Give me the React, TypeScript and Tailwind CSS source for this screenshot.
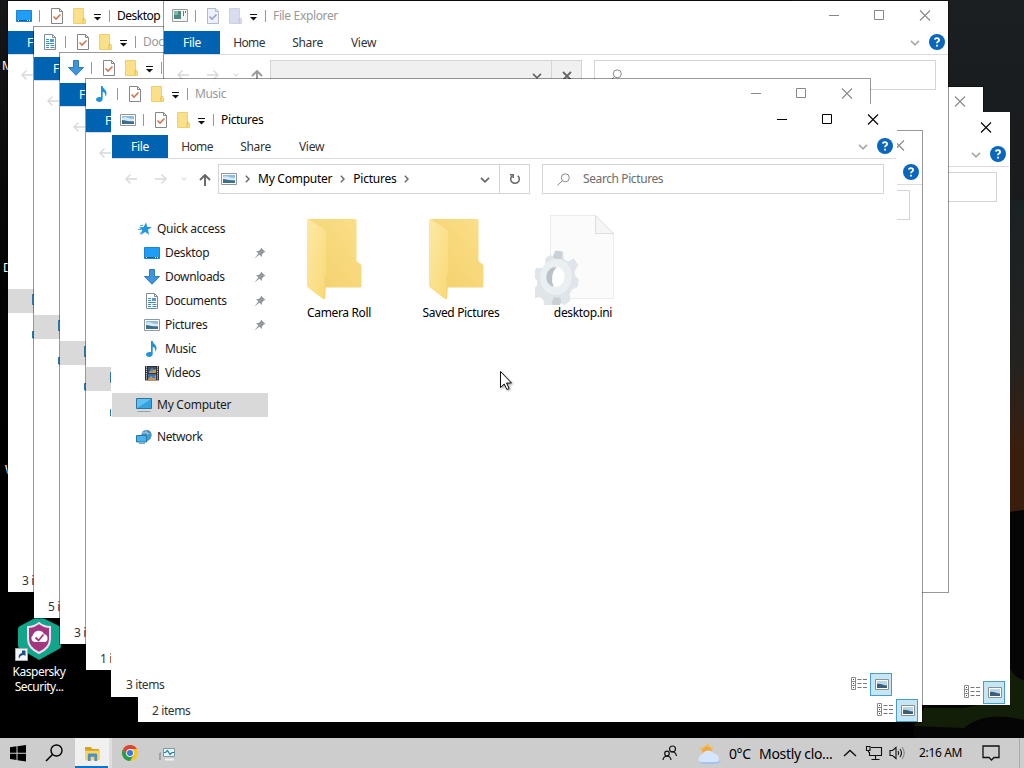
import type { ReactNode } from 'react';
import clsx from 'clsx';

type IconName = 'desktop' | 'documents' | 'downloads' | 'music' | 'pictures' | 'videos' | 'explorer' | 'computer' | 'network' | 'star';

interface WindowProps {
  title?: string;
  icon: IconName;
  place: string;
  active?: boolean;
  loading?: boolean;
  covered?: boolean;
  behind?: boolean;
  items?: string;
  children?: ReactNode;
}

const Icon = ({ name }: { name: IconName }) => {
  switch (name) {
    case 'desktop':
      return (
        <svg width="16" height="16" viewBox="0 0 16 16" className="shrink-0">
          <path d="M.5 2.500h15v11H.5z" fill="#1e9ff5" stroke="#1b85d3" />
          <path d="M1 12.500h14" stroke="#0b5fa5" />
          <path d="M2 12.500h1M11 12.500h1M13 12.500h1" stroke="#fff" />
        </svg>
      );
    case 'documents':
      return (
        <svg width="16" height="16" viewBox="0 0 16 16" className="shrink-0">
          <path d="M2.500.5h8l3 3v12h-11z" fill="#fff" stroke="#7f8b96" />
          <path d="M10.500.5v3h3" fill="none" stroke="#7f8b96" />
          <path d="M4 5.500h3M4 7.500h3M4 9.500h8M4 11.500h3M4 13.500h3M8.500 11.500h4M8.500 13.500h4" stroke="#3f8ccb" />
          <path d="M8 5h4v3H8z" fill="#4f9bd8" />
        </svg>
      );
    case 'downloads':
      return (
        <svg width="16" height="16" viewBox="0 0 16 16" className="shrink-0">
          <path d="M5.500.5h5v7h5L8 15.300.5 7.500h5z" fill="#3f94dc" stroke="#2d7cc0" />
        </svg>
      );
    case 'music':
      return (
        <svg width="16" height="16" viewBox="0 0 16 16" className="shrink-0">
          <path d="M7 0h1.600c.5 3 4.400 3.800 3.900 8.200-.1 1-.6 1.800-1.300 2.600.7-2.600-.5-4.300-2.500-5V13c0 1.700-1.500 2.900-3.300 2.900C3.600 15.900 2 15 2 13.500 2 11.800 3.800 10.600 7 11z" fill="#1e93dc" />
        </svg>
      );
    case 'pictures':
      return (
        <svg width="16" height="16" viewBox="0 0 16 16" className="shrink-0">
          <path d="M.5 2.500h15v11H.5z" fill="#fff" stroke="#8e979e" />
          <path d="M2 4h12v8H2z" fill="#8dbce4" />
          <path d="M2 6c4-2 5 1 12 1v2H2z" fill="#dceaf5" />
          <path d="M2 8c3 0 6 2 12 1.500V12H2z" fill="#3f6d8c" />
        </svg>
      );
    case 'videos':
      return (
        <svg width="16" height="16" viewBox="0 0 16 16" className="shrink-0">
          <path d="M1 1h14v14.500H1z" fill="#333" />
          <path d="M2.500 1.500v14M13.500 1.500v14" stroke="#d8d8d8" strokeDasharray="1.200 1" />
          <path d="M4 2h8v6H4z" fill="#38506e" />
          <path d="M4 9h8v6H4z" fill="#3970b0" />
          <path d="M5 7l3-4 2 2 2-1v4H5zM4 14l3-3 2 1 3-2v5H4z" fill="#c99445" />
          <path d="M6 4h3v2H6zM8 11h3v2H8z" fill="#457ed0" />
        </svg>
      );
    case 'explorer':
      return (
        <svg width="16" height="16" viewBox="0 0 16 16" className="shrink-0">
          <path d="M.5 1.500h15v12H.5z" fill="#f4f4f4" stroke="#9b9b9b" />
          <path d="M2 3h7v8H2z" fill="#4d8a7e" />
          <path d="M2 3h4v4H2z" fill="#7cb9a8" />
          <path d="M11.500 3v5M13.500 3v2" stroke="#777" />
        </svg>
      );
    case 'computer':
      return (
        <svg width="16" height="16" viewBox="0 0 16 16" className="shrink-0">
          <path d="M.5 1.500h15v10H.5z" fill="#5fc0f2" stroke="#31729e" />
          <path d="M1 11L15 2v9z" fill="#35a3e2" />
          <path d="M1.500 14.500h13" stroke="#8aa4b5" />
        </svg>
      );
    case 'network':
      return (
        <svg width="16" height="16" viewBox="0 0 16 16" className="shrink-0">
          <circle cx="10.500" cy="6" r="5.200" fill="#4b8fc0" />
          <path d="M9 1q3 3 4 8M6 4q4-1 8 1" stroke="#a5d3ee" fill="none" />
          <path d="M.5 6.500h10v6.500H.5z" fill="#48b3ed" stroke="#2a74a6" />
          <path d="M11 12.500l3.500-2.500V3.500L11 6z" fill="#3c9dd8" />
          <path d="M3 14.500h6" stroke="#6ba5c8" />
        </svg>
      );
    default:
      return (
        <svg width="16" height="16" viewBox="0 0 16 16" className="shrink-0">
          <path d="M10 1.500l1.300 4.400 4.500.2-3.800 2.700 1 4.900L9.200 11l-4.700 3 1.700-4.800L3 6.200l4.600-.1z" fill="#2396e3" />
          <path d="M4 4.500h3M2 8.500h3M3.500 12h3" stroke="#4ba8e8" />
        </svg>
      );
  }
};

const CheckPage = ({ muted }: { muted?: boolean }) => (
  <svg width="14" height="16" viewBox="0 0 14 16" className="shrink-0">
    <path d="M1.500.5h8l3 3v12h-11z" fill={muted ? '#eef1fa' : '#fff'} stroke={muted ? '#b4b9cc' : '#858585'} />
    <path d="M9.500.5v3h3" fill="none" stroke={muted ? '#b4b9cc' : '#858585'} />
    <path d="M3.500 8.500l2.500 2.500 4.500-4.500" fill="none" stroke={muted ? '#9aa3cf' : '#d2774f'} strokeWidth="1.600" />
  </svg>
);

const SmallFolder = ({ muted }: { muted?: boolean }) => (
  <svg width="14" height="16" viewBox="0 0 14 16" className="shrink-0">
    <path d="M1.500.5h10v9.500l2 1v4.500h-12z" fill={muted ? '#d9dcef' : '#fbe08a'} stroke={muted ? '#cdd1e6' : '#f0d069'} />
    <path d="M11 15v-4l1-1" fill="none" stroke={muted ? '#b9bfdc' : '#dfb84c'} />
  </svg>
);

const Chevron = ({ className }: { className?: string }) => (
  <svg width="10" height="6" viewBox="0 0 10 6" className={clsx('shrink-0', className)}>
    <path d="M1 .8l4 4 4-4" fill="none" stroke="currentColor" strokeWidth="1.700" />
  </svg>
);

const Crumb = () => (
  <svg width="5" height="8" viewBox="0 0 5 8" className="shrink-0">
    <path d="M.8.800L4 4 .8 7.200" fill="none" stroke="#666" strokeWidth="1.400" />
  </svg>
);

const Pin = () => (
  <svg width="12" height="12" viewBox="0 0 12 12">
    <path d="M7 .5L11.500 5l-1.300.3-2.200 2.200-.2 2.600-2.400-2.400L.5 11.500 4.300 6.600 2 4.300l2.700-.3L6.800 1.900z" fill="#929a9f" />
  </svg>
);

const Arrow = ({ dir, className }: { dir: 'left' | 'right' | 'up'; className?: string }) => (
  <svg width="12" height="12" viewBox="0 0 12 12" className={clsx('shrink-0', className)}>
    {dir === 'left' && <path d="M12 6H1M5.500 1.500L1 6l4.500 4.500" fill="none" stroke="currentColor" strokeWidth="1.400" />}
    {dir === 'right' && <path d="M0 6h11M6.500 1.500L11 6l-4.500 4.500" fill="none" stroke="currentColor" strokeWidth="1.400" />}
    {dir === 'up' && <path d="M6 12V1M1 6l5-5 5 5" fill="none" stroke="currentColor" strokeWidth="1.900" />}
  </svg>
);

const links: { label: string; icon: IconName; pinned?: boolean }[] = [
  { label: 'Desktop', icon: 'desktop', pinned: true },
  { label: 'Downloads', icon: 'downloads', pinned: true },
  { label: 'Documents', icon: 'documents', pinned: true },
  { label: 'Pictures', icon: 'pictures', pinned: true },
  { label: 'Music', icon: 'music' },
  { label: 'Videos', icon: 'videos' },
];

const Sidebar = ({ covered }: { covered?: boolean }) => (
  <div className="w-[156px] shrink-0 pt-[23px]">
    <div className="flex h-6 items-center gap-[5px] pl-6">
      <Icon name="star" />
      {!covered && <span>Quick access</span>}
    </div>
    {links.map((link) => (
      <div key={link.label} className="flex h-6 items-center gap-[5px] pl-8 pr-0.5">
        <Icon name={link.icon} />
        {!covered && <span className="grow tracking-[-0.35px]">{link.label}</span>}
        {!covered && link.pinned && <Pin />}
      </div>
    ))}
    <div className="mt-2 flex h-6 items-center gap-[5px] bg-[#d9d9d9] pl-6">
      <Icon name="computer" />
      {!covered && <span className="tracking-[-0.25px]">My Computer</span>}
    </div>
    <div className="mt-2 flex h-6 items-center gap-[5px] pl-6">
      <Icon name="network" />
      {!covered && <span className="tracking-[-0.4px]">Network</span>}
    </div>
  </div>
);

const ExplorerWindow = ({ title, icon, place, active, loading, covered, behind, items, children }: WindowProps) => (
  <div
    className={clsx(
      'absolute flex h-[593px] w-[786px] flex-col border bg-white bg-clip-padding text-[12px] leading-4 tracking-[-0.3px] text-[#1a1a1a]',
      active ? 'border-white' : 'border-black/40',
      place,
    )}
  >
    {/* title bar */}
    <div className="flex h-[30px] shrink-0 items-center pl-2">
      <Icon name={icon} />
      <div className="ml-[7px] h-3 w-px bg-[#999]" />
      <div className="ml-[10px] flex items-center gap-2">
        <CheckPage muted={loading} />
        <SmallFolder muted={loading} />
      </div>
      <svg width="8" height="7" viewBox="0 0 8 7" className="ml-[8px] mt-0.5 shrink-0">
        <path d="M0 .5h7" stroke="#111" />
        <path d="M0 3h7L3.500 6.500z" fill="#111" />
      </svg>
      <div className="ml-[7px] h-3 w-px bg-[#999]" />
      <span
        className={clsx(
          'ml-[7px] grow',
          title === 'Desktop' ? 'tracking-[-0.5px]' : 'tracking-[-0.35px]',
          active || title === 'Desktop' ? 'text-black' : 'text-[#999]',
        )}
      >
        {title}
      </span>
      <div className={clsx('flex', active ? 'text-black' : 'text-[#888]')}>
        <svg width="46" height="30" viewBox="0 0 46 30"><path d="M19 14.500h10" stroke="currentColor" /></svg>
        <svg width="46" height="30" viewBox="0 0 46 30"><path d="M18.500 9.500h9v9h-9z" fill="none" stroke="currentColor" /></svg>
        <svg width="46" height="30" viewBox="0 0 46 30"><path d="M18 9.500l10 10M28 9.500l-10 10" stroke="currentColor" strokeWidth="1.100" /></svg>
      </div>
    </div>

    {/* ribbon tabs */}
    <div className="flex h-6 shrink-0 items-center border-b border-[#dadbdc] text-center tracking-[-0.3px] text-[#333]">
      <div className="flex h-[23px] w-14 items-center justify-center bg-[#0063b1] text-white">{!behind && 'File'}</div>
      {!covered && (
        <>
          <div className="w-[58px] tracking-[-0.6px]">Home</div>
          <div className="w-[59px]">Share</div>
          <div className="w-[53px]">View</div>
        </>
      )}
      <div className="flex grow items-center justify-end gap-[9px] pr-[3px]">
        <Chevron className="text-[#aaa]" />
        <svg width="16" height="16" viewBox="0 0 16 16" className="-mt-px">
          <circle cx="8" cy="8" r="8" fill="#0b66bd" />
          <path d="M5.900 5.600Q6 4.200 8 4.200t2.100 1.700Q10.100 7 8.800 7.700 8 8.200 8 9.300M8 10.800v1.700" fill="none" stroke="#fff" strokeWidth="1.800" />
        </svg>
      </div>
    </div>

    {/* address row */}
    <div className="flex h-[35px] shrink-0 items-center pl-[13px] pt-[5px]">
      <Arrow dir="left" className="text-[#d8d8d8]" />
      <Arrow dir="right" className="ml-[18px] text-[#d8d8d8]" />
      <Chevron className="ml-[14px] w-1.5 text-[#d8d8d8]" />
      <Arrow dir="up" className={clsx('ml-[12px] mt-0.5', loading ? 'text-[#999]' : 'text-[#666]')} />
      <div className={clsx('ml-[7px] flex h-[30px] w-[312px] shrink-0 border border-[#d4d4d4]', loading && 'bg-[#f0f0f0]')}>
        <div className="flex grow items-center gap-[8px] pl-0.5">
          {!loading && (
            <>
              <Icon name={icon} />
              {!covered && (
                <>
                  <Crumb />
                  <span className="tracking-[-0.25px] text-black">My Computer</span>
                  <Crumb />
                  <span className="tracking-[-0.25px] text-black">{title}</span>
                  <Crumb />
                </>
              )}
            </>
          )}
          <Chevron className="ml-auto mr-[9px] mt-0.5 text-[#666]" />
        </div>
        <div className="flex w-[30px] items-center justify-center border-l border-[#d4d4d4] text-[#666]">
          {loading ? (
            <svg width="10" height="10" viewBox="0 0 10 10" className="mt-0.5"><path d="M1 1l8 8M9 1L1 9" stroke="currentColor" strokeWidth="1.800" /></svg>
          ) : (
            <svg width="12" height="12" viewBox="0 0 12 12">
              <path d="M3.200 2.800A4.300 4.300 0 1 0 8.800 2.800" fill="none" stroke="currentColor" strokeWidth="1.500" />
              <path d="M1 1.700h3.200v3.400" fill="none" stroke="currentColor" strokeWidth="1.500" />
            </svg>
          )}
        </div>
      </div>
      <div className="ml-3 flex h-[30px] w-[342px] shrink-0 items-center gap-[13px] border border-[#d4d4d4] pl-[14px] text-[#6d6d6d]">
        <svg width="13" height="13" viewBox="0 0 13 13">
          <circle cx="8.300" cy="4.800" r="4" fill="none" stroke="#888" />
          <path d="M5.300 7.800L.5 12.300" stroke="#888" />
        </svg>
        {!loading && !covered && <span className="tracking-[-0.4px]">Search {title}</span>}
      </div>
    </div>

    <div className="flex min-h-0 grow">
      {!loading && <Sidebar covered={covered} />}
      {children}
    </div>

    {/* status bar */}
    {!loading && (
      <div className="flex h-6 shrink-0 items-center pl-[14px] pr-1 text-[#333]">
        <span className="grow pt-0.5 tracking-[-0.4px]">{items}</span>
        <svg width="17" height="13" viewBox="0 0 17 13" className="-mt-px">
          <path d="M.5.5h4v12h-4zM.5 4.500h4M.5 8.500h4" fill="none" stroke="#8a8a8a" />
          <path d="M2 2.500h1M2 6.500h1M2 10.500h1" stroke="#444" />
          <path d="M6.500 2.500h4M12 2.500h4M6.500 6.500h4M12 6.500h4M6.500 10.500h4M12 10.500h4" stroke="#777" />
        </svg>
        <div className="ml-0.5 flex h-[23px] w-[22px] items-center justify-center border border-[#4a9cc9] bg-[#c5e6f5]">
          <svg width="14" height="11" viewBox="0 0 14 11" className="ml-px">
            <path d="M.5.5h13v10H.5z" fill="#fff" stroke="#8a8f94" />
            <path d="M2 2h10v7H2z" fill="#b9d6ea" />
            <path d="M2 5c3-1 6 1.500 10 1.500V9H2z" fill="#3b5f77" />
          </svg>
        </div>
      </div>
    )}
  </div>
);

const FolderIcon = () => (
  <svg width="96" height="96" viewBox="0 0 96 96">
    <defs>
      <linearGradient id="back" x1="0" y1="1" x2="1" y2="0">
        <stop offset="0" stopColor="#f2d06c" />
        <stop offset="1" stopColor="#fbdf88" />
      </linearGradient>
      <linearGradient id="flap" x1="0" y1="0" x2="1" y2="1">
        <stop offset="0" stopColor="#fde9a6" />
        <stop offset="1" stopColor="#f9d976" />
      </linearGradient>
    </defs>
    <path d="M17 10h47q1.500 0 1.500 1.500V52l5 4v21q0 1.500-1.500 1.500H30z" fill="url(#back)" />
    <path d="M16 11.500q0-2 2-1L33 20q2 1 2 4v42l-1 24q-1 .8-3-.8L17.500 79Q16 78 16 76z" fill="url(#flap)" />
    <path d="M34.500 66l-1 24" stroke="#f4d170" />
  </svg>
);

const SettingsFileIcon = () => (
  <svg width="96" height="96" viewBox="0 0 96 96">
    <path d="M15.500 6.500h45l18 18v65h-63z" fill="#fbfbfb" stroke="#ebebeb" />
    <path d="M60.500 6.500v18h18z" fill="#f6f6f6" stroke="#dedede" />
    <g transform="translate(21 68) rotate(8) scale(.88 1)">
      <path
        d="M-5-26H4l2 7 5 2 6-4 6 6-3 7 1 4 5 3v8l-6 3-2 5 2 6-6 6-6-3-5 3-3 5H-9l-1-7-5-3-6 2-3-8 4-5-1-5-5-4 2-8 7-1 3-4-1-6 5-4 5 2z"
        fill="#dfe5e9"
      />
      <path d="M-5-26l-2 7 5 1 6-1-1-7zM-1 26l2-6h7l2 5-2 3H0z" fill="#c9d1d6" />
      <circle r="14" fill="none" stroke="#eaeff2" strokeWidth="8" />
      <circle r="10" fill="#fff" />
      <path d="M-1-10a10 10 0 0 0 0 20q-7-10 0-20" fill="#bac2c7" />
    </g>
  </svg>
);

const FileTile = ({ label, children }: { label: string; children: ReactNode }) => (
  <div className="flex w-[122px] flex-col items-center text-black">
    {children}
    <span className="tracking-[-0.35px]">{label}</span>
  </div>
);

const Taskbar = () => (
  <div className="absolute inset-x-0 bottom-0 flex h-[30px] items-center bg-[#cdcdcd] text-black">
    <svg width="36" height="30" viewBox="0 0 36 30">
      <path d="M10 9.300l6.500-1v6.400H10zM17.500 8.200L26 7v7.700h-8.500zM10 15.700h6.500v6.400l-6.500-1zM17.500 15.700H26v7.800l-8.500-1.300z" fill="#000" />
    </svg>
    <svg width="39" height="30" viewBox="0 0 39 30">
      <circle cx="20.500" cy="12.500" r="5.500" fill="none" stroke="#000" strokeWidth="1.400" />
      <path d="M16.500 16.500l-6.500 6.500" stroke="#000" strokeWidth="1.600" />
    </svg>
    <div className="flex h-[30px] w-[33px] items-center justify-center border-b-2 border-[#0a74cf] bg-[#f0f0f0] pl-0.5 pt-1">
      <svg width="17" height="15" viewBox="0 0 18 16">
        <path d="M1 0h6l2 2h7v3H1z" fill="#d9a322" />
        <path d="M1 4h16v10H1z" fill="#fbd55f" />
        <path d="M4 15V8.500Q4 7 5.500 7h7Q14 7 14 8.500V15h-3v-4.500H7V15z" fill="#4b90c6" />
      </svg>
    </div>
    <div className="h-[30px] w-1 border-l border-white/60 bg-[#dedede]" />
    <svg width="36" height="30" viewBox="0 0 36 30">
      <g transform="translate(18 15)">
        <circle r="8" fill="#f9c522" />
        <path d="M-6.930-4A8 8 0 0 1 6.930-4H0L-3.500 2z" fill="#dc4437" />
        <path d="M-6.930-4A8 8 0 0 0 0 8L3.500 2-3.500 2z" fill="#289b53" />
        <circle r="3.900" fill="#f4f4f4" />
        <circle r="3" fill="#3478e5" />
      </g>
    </svg>
    <svg width="38" height="30" viewBox="0 0 38 30">
      <path d="M15.500 10.500h11v8h-11z" fill="#e3f5fa" stroke="#8399a2" />
      <path d="M16 14.500h1.500l2-2 2.500 4 2-2h2.500" fill="none" stroke="#24839c" strokeWidth="1.200" />
      <path d="M12.500 14v8M11.500 15v7" stroke="#9aa5aa" fill="none" />
      <path d="M17 21.500h9" stroke="#eef2f4" strokeWidth="2" />
    </svg>

    <div className="ml-auto flex h-full items-center">
      <svg width="16" height="16" viewBox="0 0 16 16" fill="none" stroke="#111" strokeWidth="1.200">
        <circle cx="10.500" cy="4" r="3" />
        <path d="M8.500 7c3-1 5.500.5 6 4" />
        <circle cx="5" cy="8.500" r="2.300" />
        <path d="M1 15c.5-5 7.500-5 8 0" />
      </svg>
      <svg width="26" height="24" viewBox="0 0 26 24" className="ml-[18px] mt-0.5">
        <path d="M12 1l1.500 3.500L17 5l-1 4 1 3H7l-2-4-2-2 5-1z" fill="#efbb66" />
        <circle cx="11" cy="9" r="4.500" fill="#f0a73e" />
        <path d="M6 22a5 5 0 0 1 0-9.500 7 7 0 0 1 12-1 5.600 5.600 0 0 1 2 10.500z" fill="#d7e5fa" />
        <path d="M2 19q2 3 5 3h13q4 0 5-4-2 2-6 2H7q-3 0-5-1z" fill="#a5c3ee" />
      </svg>
      <span className="ml-[7px] w-[30px] whitespace-nowrap text-[14px] tracking-[-0.4px]">0°C</span>
      <span className="w-[78px] whitespace-nowrap text-[14px] tracking-[-0.3px]">Mostly clo...</span>
      <svg width="14" height="8" viewBox="0 0 14 8" className="ml-[6px]"><path d="M1 7l6-5.500L13 7" fill="none" stroke="#111" strokeWidth="1.400" /></svg>
      <svg width="18" height="16" viewBox="0 0 18 16" className="ml-2" fill="none" stroke="#111" strokeWidth="1.100">
        <path d="M6 2.500h10.500v8H4.500V7M10.500 10.500v4M6.500 14.500h8M1.500 1.500h3.500v4H1.500zM3.500 5.500v2" />
      </svg>
      <svg width="17" height="16" viewBox="0 0 17 16" className="ml-[6px]" fill="none" stroke="#111" strokeWidth="1.100">
        <path d="M1 5.500h2.500L7 2.500v11l-3.500-3H1z" />
        <path d="M9 6q1.500 2 0 4M11 4q3 4 0 8" />
        <path d="M13 2q4.500 6 0 12" stroke="#888" />
      </svg>
      <span className="ml-[13px] w-[46px] whitespace-nowrap text-[12px] tracking-[-0.35px]">2:16 AM</span>
      <svg width="18" height="18" viewBox="0 0 18 18" className="ml-[17px]"><path d="M1 2h16v11.500h-5L9.500 16 7 13.500H1z" fill="none" stroke="#111" strokeWidth="1.300" /></svg>
      <div className="ml-[19px] mr-1 h-full w-px bg-[#aaa]" />
    </div>
  </div>
);

const Kaspersky = () => (
  <div className="absolute left-0 top-[616px] flex w-[78px] flex-col items-center text-center text-[12px] leading-[15px] tracking-[-0.5px] text-white">
    <div className="relative mb-1">
      <svg width="44" height="44" viewBox="0 0 44 44">
        <path d="M22 0l20 10q2 1 2 3v17q0 2-2 3L22 44 3 33q-2-1-2-3V13q0-2 2-3z" fill="#11a58b" />
        <path d="M22 7q5 4 11 4v12q0 9-11 14-11-5-11-14V11q6 0 11-4z" fill="#a3367f" stroke="#ecdff0" strokeWidth="2" />
        <path d="M17 26a4 4 0 0 1-1-7 6 6 0 0 1 11-1 4.200 4.200 0 0 1 1 8z" fill="#fff" />
        <path d="M18.500 21.500l3 3 5-6" fill="none" stroke="#a3367f" strokeWidth="1.800" />
      </svg>
      <svg width="13" height="13" viewBox="0 0 13 13" className="absolute -left-[2px] bottom-[-1px]">
        <path d="M.5.5h12v12H.5z" fill="#f5f7fa" stroke="#aaa" />
        <path d="M4 11Q2.500 6 7 5V2.500h3.500V8L9 7Q5 7 4 11z" fill="#234f87" />
      </svg>
    </div>
    <span>Kaspersky</span>
    <span>Security...</span>
  </div>
);

export default function App() {
  return (
    <div className="relative h-screen w-screen overflow-hidden bg-linear-to-b from-[#1b1f22] via-[#171819] via-40% to-black to-75% font-['Noto_Sans',sans-serif]">
      {/* wallpaper */}
      <div className="absolute left-0 top-0 h-[738px] w-16 bg-linear-to-b from-[#151719] to-black to-80%" />
      <div className="absolute right-0 top-[200px] h-[315px] w-6 bg-linear-to-b from-[#1a2124] via-[#232220] via-50% to-[#3a1e0c] to-80%" />
      <svg width="110" height="250" viewBox="0 0 110 250" className="absolute right-0 top-[490px]">
        <path d="M70 32q15-10 40-12v230H0v-40h86z" fill="#050505" />
        <path d="M96 178q4 10 14 12v40q-40-10-60 8L0 236l10-18h40l46-9z" fill="#131e08" />
      </svg>
      <div className="absolute left-[2px] top-[58px] text-[12px] leading-4 text-white">M</div>
      <div className="absolute left-[3px] top-[260px] text-[12px] leading-4 text-white">D</div>
      <div className="absolute left-[5px] top-[462px] text-[12px] leading-4 text-white">W</div>
      <Kaspersky />

      <ExplorerWindow icon="videos" place="left-[198px] top-[86px]" covered behind />
      <ExplorerWindow icon="pictures" place="left-[224px] top-[112px]" active covered behind />
      <ExplorerWindow title="Desktop" icon="desktop" place="left-[7px] top-0" items="3 items" covered />
      <ExplorerWindow title="Documents" icon="documents" place="left-[33px] top-[26px]" items="5 items" covered />
      <ExplorerWindow icon="downloads" place="left-[59px] top-[52px]" items="3 items" covered />
      <ExplorerWindow title="File Explorer" icon="explorer" place="left-[163px] top-0" loading />
      <ExplorerWindow title="Music" icon="music" place="left-[85px] top-[78px]" items="1 item" covered />
      <ExplorerWindow icon="videos" place="left-[137px] top-[130px]" items="2 items" covered behind />
      <ExplorerWindow title="Pictures" icon="pictures" place="left-[111px] top-[104px]" items="3 items" active>
        <div className="flex pl-[10px] pt-[15px]">
          <FileTile label="Camera Roll"><FolderIcon /></FileTile>
          <FileTile label="Saved Pictures"><FolderIcon /></FileTile>
          <FileTile label="desktop.ini"><SettingsFileIcon /></FileTile>
        </div>
      </ExplorerWindow>

      <Taskbar />

      <svg width="16" height="22" viewBox="0 0 16 22" className="absolute left-[499px] top-[370px] drop-shadow-[1px_1px_1px_rgba(0,0,0,0.4)]">
        <path d="M1.500 1.500v16l3.700-3.500 2.700 5.500 2.200-1-2.600-5.500h5z" fill="#fff" stroke="#111" />
      </svg>
    </div>
  );
}
